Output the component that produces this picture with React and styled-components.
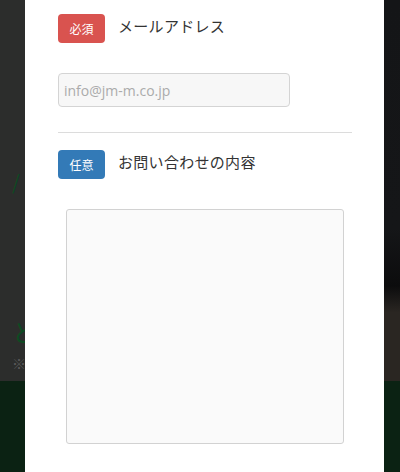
import React from 'react'
import styled, { createGlobalStyle } from 'styled-components'

const GlobalStyle = createGlobalStyle`
  html, body {
    margin: 0;
    padding: 0;
    background: #141517;
    font-family: "Noto Sans CJK JP", "Noto Sans", sans-serif;
    overflow: hidden;
  }
`

const Page = styled.div`
  position: relative;
  width: 400px;
  height: 472px;
  display: flex;
  flex-direction: column;
  overflow: hidden;
`

const Hero = styled.div`
  height: 381px;
  display: grid;
  grid-template-columns: 200px 1fr;
`

const HeroText = styled.div`
  background: #2c2d2c;
  padding: 172px 0 0 12px;
  display: flex;
  flex-direction: column;
  color: #0d4a22;
`

const Faint = styled.span`
  font-size: ${(p) => p.size || 22}px;
  line-height: 1;
  margin-top: ${(p) => p.gap || 0}px;
  color: ${(p) => p.color || '#0d4a22'};
`

const HeroPhoto = styled.div`
  background:
    radial-gradient(ellipse 60px 40px at 390px 120px, #3a3b3d 0%, transparent 70%),
    linear-gradient(180deg, #141517 0%, #151618 60%, #0c0c0d 75%, #2a2622 82%, #2a2622 100%);
`

const Footer = styled.div`
  flex: 1;
  background: #0b2213;
`

const Modal = styled.div`
  position: absolute;
  top: 0;
  left: 25px;
  width: 359px;
  height: 472px;
  box-sizing: border-box;
  background: #fff;
  padding: 14px 32px 0 33px;
  display: flex;
  flex-direction: column;
`

const FieldHead = styled.div`
  display: flex;
  align-items: center;
  gap: 13px;
`

const Badge = styled.span`
  width: 47px;
  height: 29px;
  border-radius: 4px;
  background: ${(p) => (p.required ? '#d9534f' : '#337ab7')};
  color: #fff;
  font-size: 12px;
  display: flex;
  align-items: center;
  justify-content: center;
`

const Label = styled.span`
  font-size: 15px;
  color: #333;
  margin-top: -6px;
  letter-spacing: 0.3px;
`

const Input = styled.input`
  margin-top: 30px;
  width: 232px;
  height: 34px;
  box-sizing: border-box;
  border: 1px solid #d4d4d4;
  border-radius: 4px;
  background: #f7f7f7;
  padding: 0 5px;
  font-family: "Open Sans", "Noto Sans", sans-serif;
  font-size: 14px;
  color: #333;
  outline: none;

  &::placeholder {
    color: #ababab;
  }
`

const Rule = styled.hr`
  margin: 25px 0 17px;
  border: 0;
  border-top: 1px solid #dcdcdc;
`

const TextArea = styled.textarea`
  margin: 30px 0 0 8px;
  width: 278px;
  height: 235px;
  box-sizing: border-box;
  border: 1px solid #d2d2d2;
  border-radius: 3px;
  background: #fafafa;
  resize: none;
  outline: none;
`

const App = () => {
  return (
    <>
      <GlobalStyle />
      <Page>
        <Hero>
          <HeroText>
            <Faint size={20}>/</Faint>
            <Faint size={24} gap={128}>と</Faint>
            <Faint size={14} gap={12} color="#5a5a5a">※</Faint>
          </HeroText>
          <HeroPhoto />
        </Hero>
        <Footer />
        <Modal>
          <FieldHead>
            <Badge required>必須</Badge>
            <Label>メールアドレス</Label>
          </FieldHead>
          <Input type="email" placeholder="info@jm-m.co.jp" />
          <Rule />
          <FieldHead>
            <Badge>任意</Badge>
            <Label>お問い合わせの内容</Label>
          </FieldHead>
          <TextArea />
        </Modal>
      </Page>
    </>
  )
}

export default App
